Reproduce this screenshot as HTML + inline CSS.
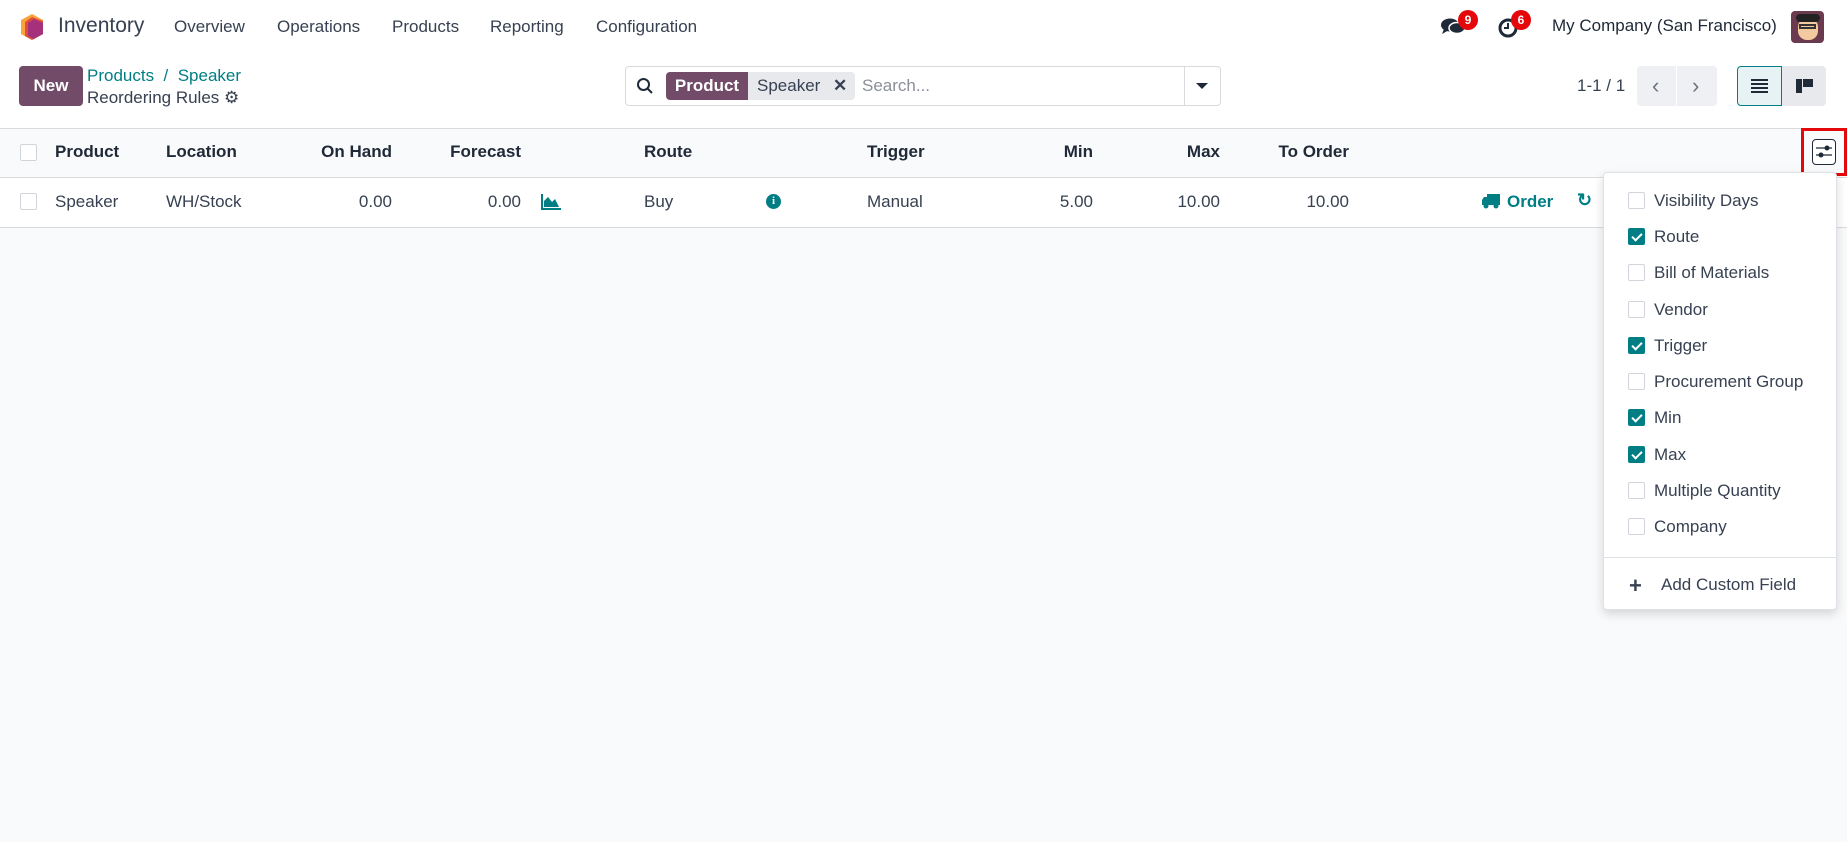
<!DOCTYPE html>
<html><head><meta charset="utf-8"><style>
*{box-sizing:border-box;margin:0;padding:0}
body{width:1847px;height:842px;background:#f9fafb;font-family:"Liberation Sans",sans-serif;color:#374151;font-size:17px;position:relative;overflow:hidden}
.a{position:absolute;white-space:nowrap}
.nav{position:absolute;left:0;top:0;width:1847px;height:54px;background:#fff}
.cp{position:absolute;left:0;top:54px;width:1847px;height:74px;background:#fff}
.th{position:absolute;left:0;top:128px;width:1847px;height:50px;background:#f9fafb;border-top:1px solid #d8dadd;border-bottom:1px solid #d8dadd}
.tr{position:absolute;left:0;top:178px;width:1847px;height:50px;background:#fff;border-bottom:1px solid #d8dadd}
.hb{font-weight:bold;color:#1f2937;top:142px}
.rw{top:192px}
.cb{position:absolute;width:17px;height:17px;border:1px solid #d1d5db;background:#fff;border-radius:2px}
.ck{background:#017e84;border-color:#017e84}
.ck:after{content:"";position:absolute;left:5px;top:2px;width:4px;height:8px;border:solid #fff;border-width:0 2px 2px 0;transform:rotate(45deg)}
.r{text-align:right}
.dd{position:absolute;left:1603px;top:172px;width:234px;height:438px;background:#fff;border:1px solid #dee2e6;border-radius:4px;box-shadow:0 4px 10px rgba(0,0,0,.15)}
.di{position:absolute;left:50px;font-size:17px;color:#374151}
</style></head><body>
<div class="nav"></div>
<svg class="a" style="left:20px;top:14px" width="24" height="26" viewBox="0 0 24 26"><path d="M12 0 L23 6 L23 20 L12 26 L1 20 L1 6Z" fill="#f9a33b"/><path d="M12 3 L23 7 L23 20 L12 26 L5 22 L5 8Z" fill="#e04f3d"/><path d="M14 5 L23 9 L23 20 L14 25 L8 22 L8 9Z" fill="#a5317c"/></svg>
<div class="a" style="left:58px;top:14px;font-size:21px;color:#374151">Inventory</div>
<div class="a" style="left:174px;top:17px">Overview</div>
<div class="a" style="left:277px;top:17px">Operations</div>
<div class="a" style="left:392px;top:17px">Products</div>
<div class="a" style="left:490px;top:17px">Reporting</div>
<div class="a" style="left:596px;top:17px">Configuration</div>
<svg class="a" style="left:1441px;top:17px" width="24" height="20" viewBox="0 0 24 20"><ellipse cx="9" cy="8" rx="9" ry="6.5" fill="#1f2937"/><path d="M3 12 L1 17 L8 13Z" fill="#1f2937"/><ellipse cx="16" cy="11" rx="8" ry="5.5" fill="#1f2937" stroke="#fff" stroke-width="1.5"/></svg>
<div class="a" style="left:1458px;top:10px;width:20px;height:20px;border-radius:10px;background:#e4080a;color:#fff;font-size:12px;font-weight:bold;text-align:center;line-height:20px">9</div>
<svg class="a" style="left:1497px;top:17px" width="22" height="22" viewBox="0 0 22 22"><circle cx="11" cy="11" r="8" fill="none" stroke="#1f2937" stroke-width="3"/><path d="M11 6 V11 H7" stroke="#1f2937" stroke-width="2" fill="none"/></svg>
<div class="a" style="left:1511px;top:10px;width:20px;height:20px;border-radius:10px;background:#e4080a;color:#fff;font-size:12px;font-weight:bold;text-align:center;line-height:20px">6</div>
<div class="a" style="left:1552px;top:16px;font-size:17px;color:#1f2937">My Company (San Francisco)</div>
<div class="a" style="left:1791px;top:11px;width:33px;height:32px;border-radius:4px;background:#6b3a4f;overflow:hidden"><div style="position:absolute;left:7px;top:7px;width:20px;height:22px;border-radius:9px;background:#f5c9a0"></div><div style="position:absolute;left:5px;top:3px;width:24px;height:8px;border-radius:4px;background:#222"></div><div style="position:absolute;left:8px;top:13px;width:17px;height:5px;border:2px solid #333"></div></div>
<div class="cp"></div>
<div class="a" style="left:19px;top:66px;width:64px;height:40px;background:#714b67;border-radius:4px;color:#fff;font-weight:bold;font-size:17px;text-align:center;line-height:40px">New</div>
<div class="a" style="left:87px;top:66px;color:#017e84;font-size:17px">Products &nbsp;/&nbsp; Speaker</div>
<div class="a" style="left:87px;top:88px;font-size:17px">Reordering Rules <span style="color:#374151">&#9881;</span></div>
<div class="a" style="left:625px;top:66px;width:596px;height:40px;border:1px solid #d8dadd;border-radius:4px;background:#fff"></div>
<svg class="a" style="left:636px;top:77px" width="18" height="18" viewBox="0 0 18 18"><circle cx="7.5" cy="7.5" r="5.5" fill="none" stroke="#1f2937" stroke-width="2"/><path d="M11.5 11.5 L16 16" stroke="#1f2937" stroke-width="2"/></svg>
<div class="a" style="left:666px;top:72px;width:82px;height:28px;background:#714b67;color:#fff;font-weight:bold;line-height:28px;text-align:center;border-radius:4px 0 0 4px">Product</div>
<div class="a" style="left:748px;top:72px;width:107px;height:28px;background:#e7e9ed;line-height:28px;padding-left:9px;border-radius:0 4px 4px 0">Speaker <span style="margin-left:8px;font-weight:bold">&#x2715;</span></div>
<div class="a" style="left:862px;top:76px;color:#8a8f98">Search...</div>
<div class="a" style="left:1184px;top:67px;width:1px;height:38px;background:#d8dadd"></div>
<div class="a" style="left:1196px;top:83px;width:0;height:0;border-left:6px solid transparent;border-right:6px solid transparent;border-top:6px solid #1f2937"></div>
<div class="a" style="left:1577px;top:76px">1-1 / 1</div>
<div class="a" style="left:1637px;top:66px;width:80px;height:40px;background:#eef0f3;border-radius:4px"></div>
<div class="a" style="left:1676px;top:66px;width:1px;height:40px;background:#fff"></div>
<div class="a" style="left:1652px;top:73px;font-size:22px;color:#6b7280">&#x2039;</div>
<div class="a" style="left:1692px;top:73px;font-size:22px;color:#6b7280">&#x203A;</div>
<div class="a" style="left:1737px;top:66px;width:45px;height:40px;background:#e6f2f3;border:1px solid #017e84;border-radius:4px 0 0 4px"></div>
<div class="a" style="left:1751px;top:79px;width:17px;height:14px;background:repeating-linear-gradient(#1f2937 0 2px,transparent 2px 4px)"></div>
<div class="a" style="left:1782px;top:66px;width:44px;height:40px;background:#e7e9ed;border-radius:0 4px 4px 0"></div>
<div class="a" style="left:1796px;top:79px;width:6px;height:14px;background:#1f2937"></div>
<div class="a" style="left:1803px;top:79px;width:10px;height:8px;background:#1f2937"></div>
<div class="th"></div>
<div class="tr"></div>
<div class="cb" style="left:20px;top:144px"></div>
<div class="a hb" style="left:55px">Product</div>
<div class="a hb" style="left:166px">Location</div>
<div class="a hb r" style="left:292px;width:100px">On Hand</div>
<div class="a hb r" style="left:421px;width:100px">Forecast</div>
<div class="a hb" style="left:644px">Route</div>
<div class="a hb" style="left:867px">Trigger</div>
<div class="a hb r" style="left:1000px;width:93px">Min</div>
<div class="a hb r" style="left:1120px;width:100px">Max</div>
<div class="a hb r" style="left:1249px;width:100px">To Order</div>
<div class="a" style="left:1801px;top:128px;width:46px;height:48px;border:3px solid #e4080a"></div>
<div class="a" style="left:1812px;top:139px;width:24px;height:26px;border:1.5px solid #1f2937;border-radius:4px;background:#fff"></div>
<svg class="a" style="left:1815px;top:143px" width="18" height="18" viewBox="0 0 18 18"><path d="M1 5 H17 M1 12 H17" stroke="#1f2937" stroke-width="1.3"/><circle cx="12" cy="5" r="2.5" fill="#1f2937"/><circle cx="6" cy="12" r="2.5" fill="#1f2937"/></svg>
<div class="cb" style="left:20px;top:193px"></div>
<div class="a rw" style="left:55px">Speaker</div>
<div class="a rw" style="left:166px">WH/Stock</div>
<div class="a rw r" style="left:292px;width:100px">0.00</div>
<div class="a rw r" style="left:421px;width:100px">0.00</div>
<svg class="a" style="left:541px;top:194px" width="20" height="16" viewBox="0 0 20 16"><path d="M1 0 V15 H20" stroke="#017e84" stroke-width="2" fill="none"/><path d="M3 13 V7 L7 3 L11 8 L14 5 L18 13Z" fill="#017e84"/></svg>
<div class="a rw" style="left:644px">Buy</div>
<div class="a" style="left:766px;top:194px;width:15px;height:15px;border-radius:8px;background:#017e84;color:#fff;font-size:11px;font-weight:bold;text-align:center;line-height:15px;font-family:'Liberation Serif',serif">i</div>
<div class="a rw" style="left:867px">Manual</div>
<div class="a rw r" style="left:1000px;width:93px">5.00</div>
<div class="a rw r" style="left:1120px;width:100px">10.00</div>
<div class="a rw r" style="left:1249px;width:100px">10.00</div>
<svg class="a" style="left:1482px;top:194px" width="18" height="15" viewBox="0 0 18 15"><path d="M5 0 H18 V11 H5Z M0 6 L2 3 H5 V11 H0Z" fill="#017e84"/><circle cx="4" cy="12" r="2.5" fill="#017e84"/><circle cx="14" cy="12" r="2.5" fill="#017e84"/></svg>
<div class="a rw" style="left:1507px;color:#017e84;font-weight:bold">Order</div>
<div class="a" style="left:1577px;top:190px;color:#017e84;font-weight:bold;font-size:18px">&#x21bb;</div>
<div class="dd">
<div class="cb" style="left:24px;top:19px"></div><div class="di" style="top:18px">Visibility Days</div>
<div class="cb ck" style="left:24px;top:55px"></div><div class="di" style="top:54px">Route</div>
<div class="cb" style="left:24px;top:91px"></div><div class="di" style="top:90px">Bill of Materials</div>
<div class="cb" style="left:24px;top:128px"></div><div class="di" style="top:127px">Vendor</div>
<div class="cb ck" style="left:24px;top:164px"></div><div class="di" style="top:163px">Trigger</div>
<div class="cb" style="left:24px;top:200px"></div><div class="di" style="top:199px">Procurement Group</div>
<div class="cb ck" style="left:24px;top:236px"></div><div class="di" style="top:235px">Min</div>
<div class="cb ck" style="left:24px;top:273px"></div><div class="di" style="top:272px">Max</div>
<div class="cb" style="left:24px;top:309px"></div><div class="di" style="top:308px">Multiple Quantity</div>
<div class="cb" style="left:24px;top:345px"></div><div class="di" style="top:344px">Company</div>
<div style="position:absolute;left:0;top:384px;width:232px;height:1px;background:#dee2e6"></div>
<div class="a" style="left:25px;top:400px;font-size:22px;font-weight:bold;color:#374151">+</div>
<div class="di" style="left:57px;top:402px">Add Custom Field</div>
</div>
</body></html>
